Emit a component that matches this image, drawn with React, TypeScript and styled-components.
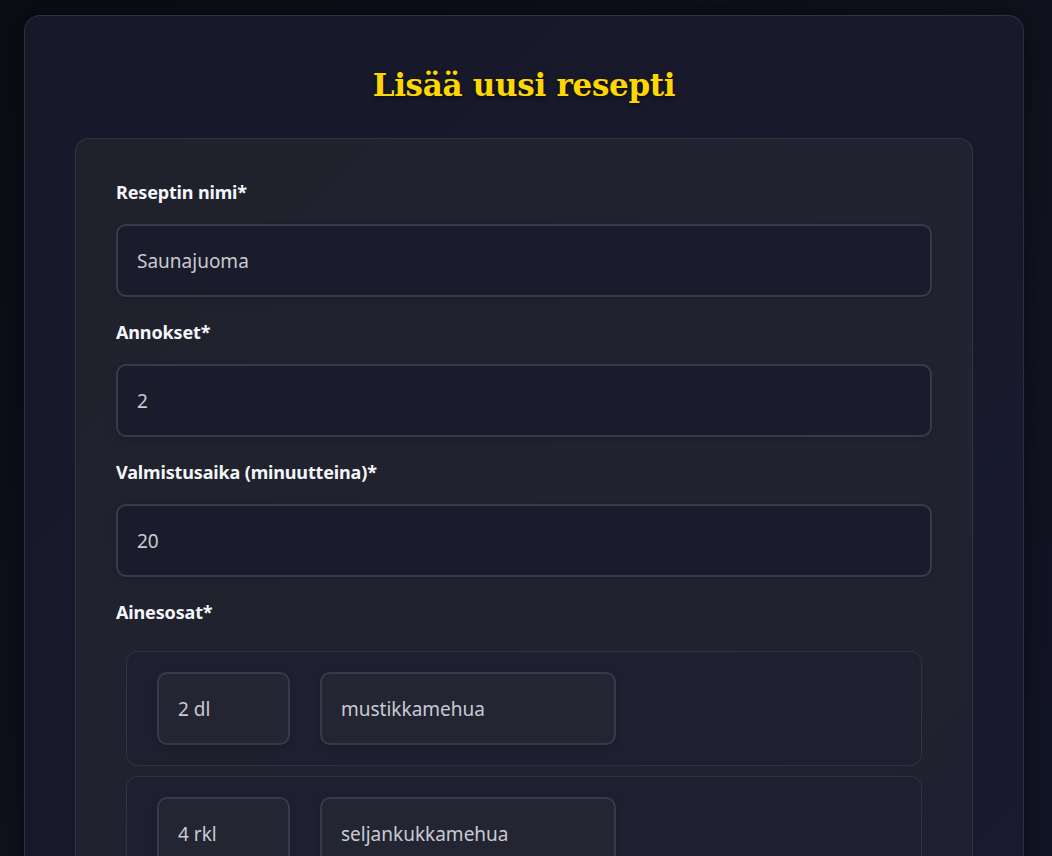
import React from "react";
import styled, { createGlobalStyle } from "styled-components";

const Global = createGlobalStyle`
  html, body { margin: 0; padding: 0; }
  body {
    background: linear-gradient(135deg, #0b0d14 0%, #10121f 50%, #131628 100%);
    min-height: 856px;
    font-family: "Noto Sans", "Open Sans", sans-serif;
    overflow: hidden;
  }
`;

const Page = styled.div`
  padding: 15px 28px 0 24px;
`;

const Card = styled.div`
  background: linear-gradient(135deg, #171829 0%, #181a2c 60%, #1a1a31 100%);
  border: 1px solid rgba(255, 255, 255, 0.1);
  border-radius: 16px;
  padding: 44px 50px 40px;
  box-shadow: 0 0 30px rgba(0, 0, 0, 0.5);
  min-height: 900px;
`;

const Title = styled.h1`
  margin: 0 0 28px;
  text-align: center;
  font-family: "DejaVu Serif", "Liberation Serif", serif;
  font-weight: 700;
  font-size: 31px;
  line-height: 50px;
  color: #ffd700;
  text-shadow: 0 2px 4px rgba(0, 0, 0, 0.5);
  letter-spacing: -0.3px;
`;

const Form = styled.form`
  background: linear-gradient(135deg, #1f212d 0%, #212330 60%, #1f2030 100%);
  border: 1px solid rgba(255, 255, 255, 0.08);
  border-radius: 14px;
  padding: 40px 40px 40px;
  display: flex;
  flex-direction: column;
`;

const Field = styled.div`
  display: flex;
  flex-direction: column;
  gap: 18px;
  margin-bottom: 22px;
`;

const Label = styled.label`
  font-family: "Noto Sans", sans-serif;
  font-weight: 700;
  font-size: 18px;
  line-height: 27px;
  color: #f4f6fa;
  letter-spacing: -0.15px;
`;

const Input = styled.input<{ $w?: number; $tone?: "dark" | "light" }>`
  box-sizing: border-box;
  height: 73px;
  width: ${(p) => (p.$w ? `${p.$w}px` : "100%")};
  padding: 0 19px;
  border: 2px solid #383a4c;
  border-radius: 10px;
  background: ${(p) => (p.$tone === "light" ? "#232532" : "#1b1c2b")};
  color: #c9cad2;
  font-family: "Noto Sans", sans-serif;
  font-size: 19px;
  outline: none;
  box-shadow: 0 2px 6px rgba(0, 0, 0, 0.15);
`;

const IngredientList = styled.div`
  display: flex;
  flex-direction: column;
  gap: 10px;
  margin: 7px 10px 0;
`;

const IngredientRow = styled.div`
  display: flex;
  gap: 30px;
  padding: 20px 30px;
  border: 1px solid rgba(255, 255, 255, 0.08);
  border-radius: 12px;
  background: #1e2030;
`;

const ingredients = [
  { amount: "2 dl", name: "mustikkamehua" },
  { amount: "4 rkl", name: "seljankukkamehua" },
  { amount: "", name: "" },
];

export default function App() {
  return (
    <>
      <Global />
      <Page>
        <Card>
          <Title>Lisää uusi resepti</Title>
          <Form onSubmit={(e) => e.preventDefault()}>
            <Field>
              <Label>Reseptin nimi*</Label>
              <Input defaultValue="Saunajuoma" />
            </Field>
            <Field>
              <Label>Annokset*</Label>
              <Input defaultValue="2" />
            </Field>
            <Field>
              <Label>Valmistusaika (minuutteina)*</Label>
              <Input defaultValue="20" />
            </Field>
            <Field>
              <Label>Ainesosat*</Label>
              <IngredientList>
                {ingredients.map((ing, i) => (
                  <IngredientRow key={i}>
                    <Input $w={133} $tone="light" defaultValue={ing.amount} />
                    <Input $w={296} $tone="light" defaultValue={ing.name} />
                  </IngredientRow>
                ))}
              </IngredientList>
            </Field>
          </Form>
        </Card>
      </Page>
    </>
  );
}
